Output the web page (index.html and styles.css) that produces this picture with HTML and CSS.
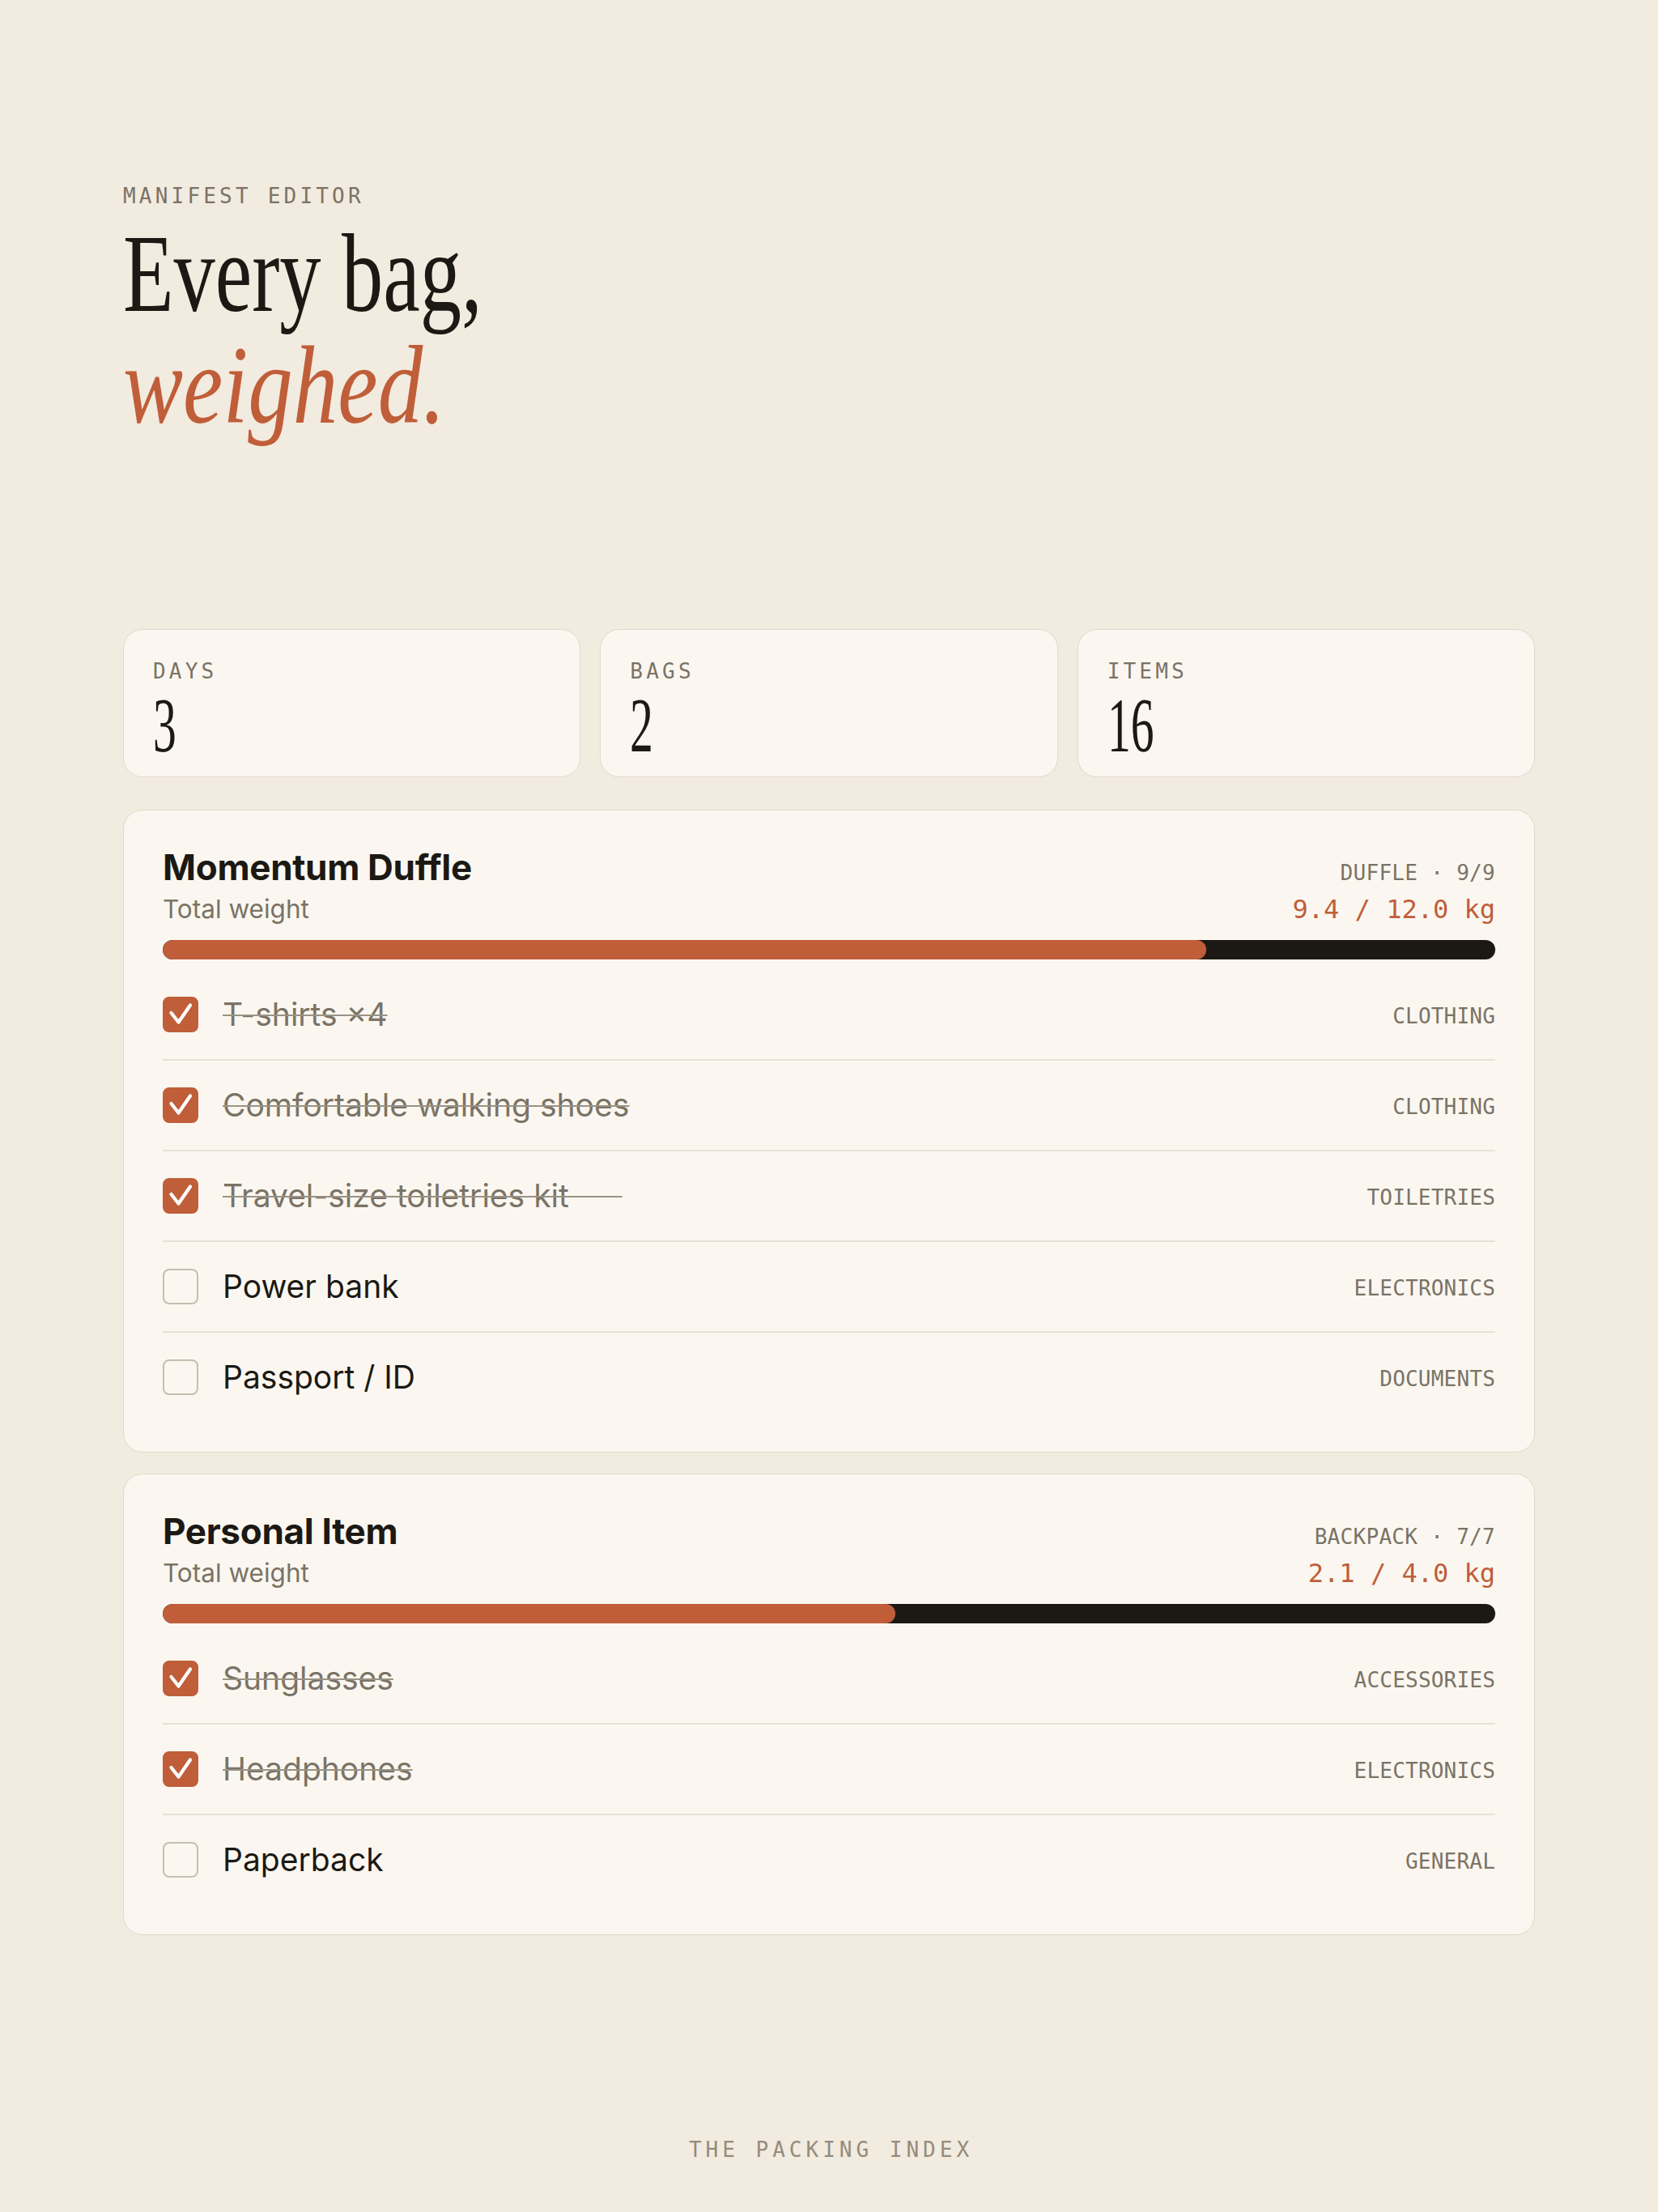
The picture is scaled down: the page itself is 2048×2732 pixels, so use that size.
FILE: index.html
```html
<!DOCTYPE html>
<html lang="en">
<head>
<meta charset="utf-8">
<title>Manifest Editor</title>
<link rel="stylesheet" href="styles.css">
</head>
<body>
<main class="page">
  <header class="intro">
    <p class="eyebrow">MANIFEST EDITOR</p>
    <h1 class="headline"><span class="hl-line">Every bag,</span><span class="hl-line hl-accent">weighed.</span></h1>
  </header>

  <section class="stats">
    <div class="stat"><div class="stat-label">DAYS</div><div class="stat-value">3</div></div>
    <div class="stat"><div class="stat-label">BAGS</div><div class="stat-value">2</div></div>
    <div class="stat"><div class="stat-label">ITEMS</div><div class="stat-value">16</div></div>
  </section>

  <section class="bags">
    <article class="bag">
      <div class="bag-head">
        <div class="bag-row1"><h2 class="bag-title">Momentum Duffle</h2><span class="bag-meta">DUFFLE · 9/9</span></div>
        <div class="bag-row2"><span class="bag-sub">Total weight</span><span class="bag-weight">9.4 / 12.0 kg</span></div>
      </div>
      <div class="bar"><div class="bar-fill" style="width:78.33%"></div></div>
      <ul class="items">
        <li class="item done"><span class="check"><svg viewBox="0 0 44 44" class="tick"><path d="M10.5 20 L19.5 31.5 L34 10.5"/></svg></span><span class="item-name">T-shirts ×4</span><span class="item-cat">CLOTHING</span></li>
        <li class="item done"><span class="check"><svg viewBox="0 0 44 44" class="tick"><path d="M10.5 20 L19.5 31.5 L34 10.5"/></svg></span><span class="item-name">Comfortable walking shoes</span><span class="item-cat">CLOTHING</span></li>
        <li class="item done"><span class="check"><svg viewBox="0 0 44 44" class="tick"><path d="M10.5 20 L19.5 31.5 L34 10.5"/></svg></span><span class="item-name">Travel-size toiletries kit&nbsp;&nbsp;&nbsp;&nbsp;&nbsp;&nbsp;</span><span class="item-cat">TOILETRIES</span></li>
        <li class="item"><span class="check"></span><span class="item-name">Power bank</span><span class="item-cat">ELECTRONICS</span></li>
        <li class="item"><span class="check"></span><span class="item-name">Passport / ID</span><span class="item-cat">DOCUMENTS</span></li>
      </ul>
    </article>

    <article class="bag">
      <div class="bag-head">
        <div class="bag-row1"><h2 class="bag-title">Personal Item</h2><span class="bag-meta">BACKPACK · 7/7</span></div>
        <div class="bag-row2"><span class="bag-sub">Total weight</span><span class="bag-weight">2.1 / 4.0 kg</span></div>
      </div>
      <div class="bar"><div class="bar-fill" style="width:55%"></div></div>
      <ul class="items">
        <li class="item done"><span class="check"><svg viewBox="0 0 44 44" class="tick"><path d="M10.5 20 L19.5 31.5 L34 10.5"/></svg></span><span class="item-name">Sunglasses</span><span class="item-cat">ACCESSORIES</span></li>
        <li class="item done"><span class="check"><svg viewBox="0 0 44 44" class="tick"><path d="M10.5 20 L19.5 31.5 L34 10.5"/></svg></span><span class="item-name">Headphones</span><span class="item-cat">ELECTRONICS</span></li>
        <li class="item"><span class="check"></span><span class="item-name">Paperback</span><span class="item-cat">GENERAL</span></li>
      </ul>
    </article>
  </section>

  <footer class="foot">THE PACKING INDEX</footer>
</main>
</body>
</html>
```

FILE: styles.css
```css
html, body {
  margin: 0;
  padding: 0;
  background: #f2ebdf;
}

.page {
  padding: 227px 152px 0;
  font-family: "Inter", "Liberation Sans", sans-serif;
  color: #1c1914;
}

.eyebrow {
  margin: 0;
  font: 400 26px/31px "DejaVu Sans Mono", "Liberation Mono", monospace;
  letter-spacing: 4.2px;
  color: #7a7366;
}

.headline {
  margin: 11px 0 0;
  font: 400 138px/138px "Liberation Serif", serif;
  color: #1c1914;
}

.hl-line {
  display: block;
  white-space: nowrap;
  transform-origin: left center;
  transform: scaleX(0.742);
}

.hl-accent {
  font-style: italic;
  color: #c05e3a;
  transform: scaleX(0.805);
}

.stats {
  margin-top: 232px;
  display: grid;
  grid-template-columns: repeat(3, 1fr);
  gap: 24px;
}

.stat {
  background: #fbf7f0;
  border: 1px solid #e0d9cc;
  border-radius: 24px;
  padding: 36px 36px 15px;
}

.stat-label {
  font: 400 26px/31px "DejaVu Sans Mono", "Liberation Mono", monospace;
  letter-spacing: 4.2px;
  color: #7a7366;
  margin-bottom: 3px;
}

.stat-value {
  display: inline-block;
  font: 400 96px/96px "Liberation Serif", serif;
  color: #1c1914;
  transform-origin: left center;
  transform: scaleX(0.6);
}

.bags {
  margin-top: 40px;
  display: flex;
  flex-direction: column;
  gap: 26px;
}

.bag {
  background: #fbf7f0;
  border: 1px solid #e0d9cc;
  border-radius: 24px;
  padding: 45px 48px 37px;
}

.bag-row1,
.bag-row2 {
  display: flex;
  justify-content: space-between;
  align-items: baseline;
}

.bag-row2 {
  margin-top: 7px;
}

.bag-title {
  margin: 0;
  font: 700 44px/50px "Inter", sans-serif;
  letter-spacing: -0.3px;
  color: #1c1914;
}

.bag-meta {
  font: 400 26px/31px "DejaVu Sans Mono", "Liberation Mono", monospace;
  letter-spacing: 0.3px;
  color: #7a7366;
}

.bag-sub {
  font: 400 31.5px/40px "Inter", sans-serif;
  color: #7a7366;
}

.bag-weight {
  font: 400 32px/40px "DejaVu Sans Mono", "Liberation Mono", monospace;
  color: #c05e3a;
}

.bar {
  margin-top: 18px;
  height: 24px;
  border-radius: 12px;
  background: #1c1914;
  overflow: hidden;
}

.bar-fill {
  height: 100%;
  background: #c05e3a;
  border-radius: 12px;
}

.items {
  list-style: none;
  margin: 13px 0 0;
  padding: 0;
}

.item {
  display: flex;
  align-items: center;
  padding: 33px 0;
  border-bottom: 2px solid #e8e1d5;
}

.item:last-child {
  border-bottom: 0;
}

.check {
  flex: none;
  width: 44px;
  height: 44px;
  box-sizing: border-box;
  border: 2px solid #c6beb0;
  border-radius: 8px;
  display: flex;
}

.item.done .check {
  background: #c05e3a;
  border-color: #c05e3a;
}

.tick {
  width: 44px;
  height: 44px;
  margin: -2px;
  fill: none;
  stroke: #ffffff;
  stroke-width: 4.2;
  stroke-linecap: round;
  stroke-linejoin: round;
}

.item-name {
  flex: 1;
  margin-left: 30px;
  font: 400 39px/44px "Inter", sans-serif;
  color: #1c1914;
}

.item.done .item-name {
  color: #7a7366;
  text-decoration: line-through;
  text-decoration-color: #9a9284;
  text-decoration-thickness: 2px;
}

.item-cat {
  padding-top: 4px;
  font: 400 26px/31px "DejaVu Sans Mono", "Liberation Mono", monospace;
  letter-spacing: 0.2px;
  color: #7a7366;
}

.foot {
  margin-top: 250px;
  padding-left: 5px;
  text-align: center;
  font: 400 26px/31px "DejaVu Sans Mono", "Liberation Mono", monospace;
  letter-spacing: 5px;
  color: #958b7c;
}
```
